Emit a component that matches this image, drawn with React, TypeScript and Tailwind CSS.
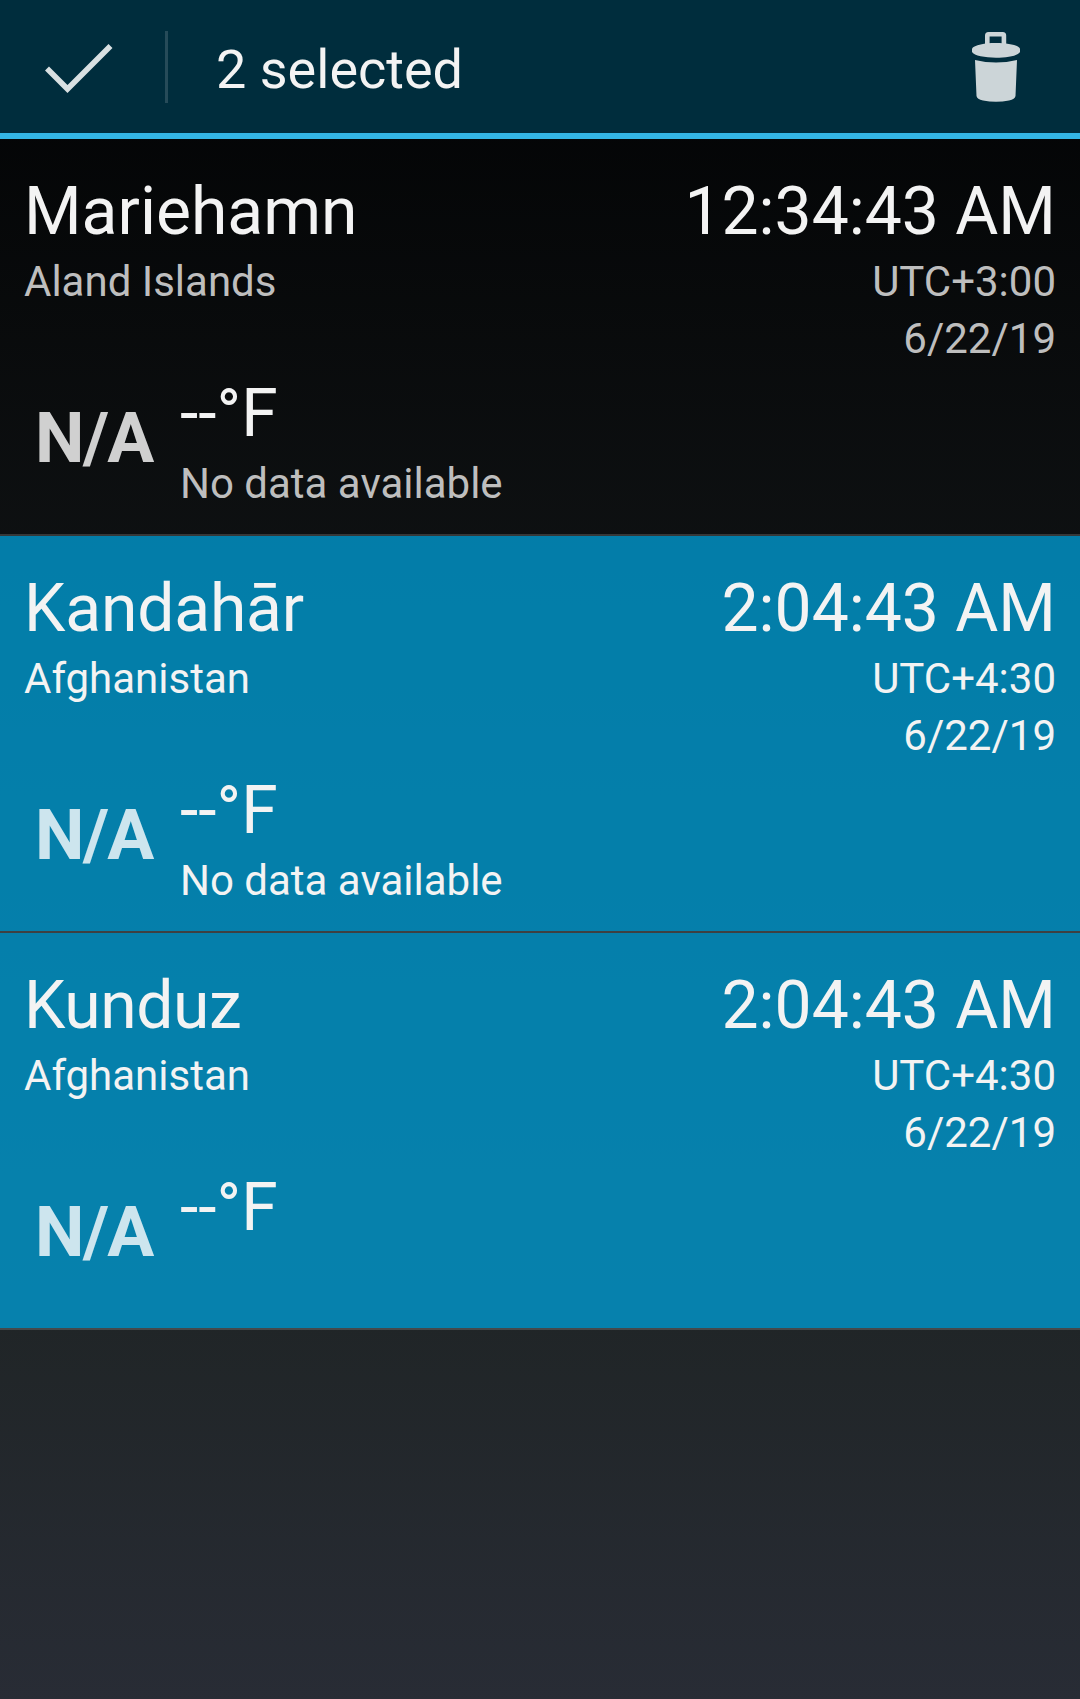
const rows = [
  { city: 'Mariehamn', country: 'Aland Islands', time: '12:34:43 AM', zone: 'UTC+3:00', note: 'No data available', selected: false, cityTracking: '' },
  { city: 'Kandahār', country: 'Afghanistan', time: '2:04:43 AM', zone: 'UTC+4:30', note: 'No data available', selected: true, cityTracking: 'tracking-[-0.2px]' },
  { city: 'Kunduz', country: 'Afghanistan', time: '2:04:43 AM', zone: 'UTC+4:30', note: '', selected: true, cityTracking: 'tracking-[-0.4px]' },
];

export default function App() {
  return (
    <div className="flex h-[1699px] w-[1080px] flex-col overflow-hidden bg-linear-to-b/srgb from-[#010203] via-[#202527] via-78% to-[#282c35] font-[Roboto,sans-serif] text-[#f3f3f3]">
      <header className="flex h-[139px] shrink-0 items-center border-b-[6px] border-[#33b5e5] bg-[#002d3d]">
        <svg className="ml-[45px] h-[53px] w-[68px]" viewBox="45 40 68 53" fill="none" stroke="#d9e0e2" strokeWidth="5.6">
          <path d="M47 68.5 L67.5 89 L110.5 46" />
        </svg>
        <div className="ml-[52px] h-[72px] w-[3px] bg-[#264b59]" />
        <h1 className="ml-[48px] grow pt-[7px] text-[54px] leading-none">2 selected</h1>
        <svg className="mr-[60px] h-[71px] w-[48px]" viewBox="972 31 48 71" fill="#ccd5d8">
          <path d="M987.3 45V35.5Q987.3 34.3 988.5 34.3H1002.7Q1003.9 34.3 1003.9 35.5V45" fill="none" stroke="#ccd5d8" strokeWidth="4.6" />
          <path d="M972 48.5C976 41 1016 41 1020 48.5V52C1016 59.5 976 59.5 972 52Z" />
          <path d="M975 60Q996 65 1017 60L1015.5 96Q1015 99 1009 100.5Q996 103 983 100.5Q977 99 976.5 96Z" />
        </svg>
      </header>
      {rows.map((r) => (
        <section key={r.city} className={`flex h-[397px] shrink-0 flex-col border-b-2 border-white/17 bg-clip-padding px-6 ${r.selected ? 'bg-[#0099ce]/80' : ''}`}>
          <div className="mt-[34px] flex justify-between text-[66px] leading-[77px]">
            <span className={r.cityTracking}>{r.city}</span>
            <span>{r.time}</span>
          </div>
          <div className={`mt-[3px] flex justify-between text-[42px] leading-[57px] ${r.selected ? '' : 'text-[#bebebe]'}`}>
            <span>{r.country}</span>
            <span className="text-right">{r.zone}<br />6/22/19</span>
          </div>
          <div className="flex">
            <span className={`mt-[22px] ml-[11px] w-[145px] text-[70px] leading-[99px] font-bold tracking-[-1.5px] ${r.selected ? 'text-[#cde5ee]' : 'text-[#d0d0d0]'}`}>N/A</span>
            <div>
              <div className="mt-[8px] text-[66px] leading-[77px]">--°F</div>
              <div className={`mt-[3px] text-[42px] leading-[57px] ${r.selected ? '' : 'text-[#bebebe]'}`}>{r.note}</div>
            </div>
          </div>
        </section>
      ))}
    </div>
  );
}
